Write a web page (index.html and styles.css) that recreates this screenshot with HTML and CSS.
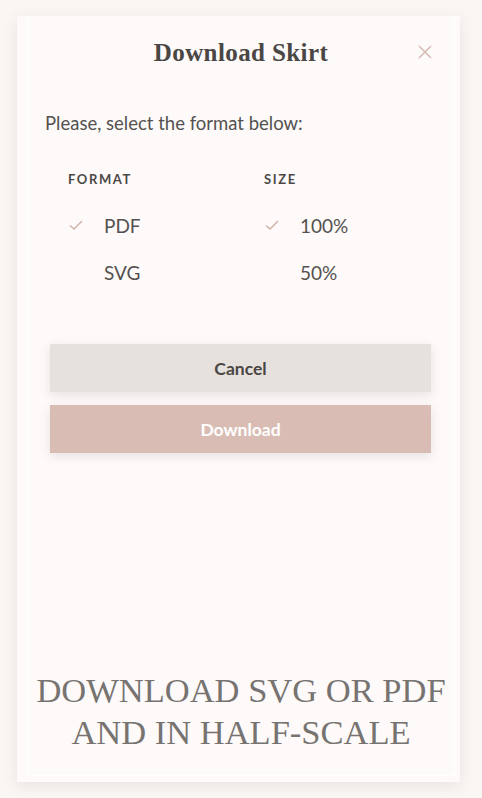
FILE: index.html
```html
<!DOCTYPE html>
<html>
<head>
<meta charset="utf-8">
<link rel="stylesheet" href="styles.css">
</head>
<body>
<div class="card">
  <div class="inner">
    <div class="header">
      <h1 class="title">Download Skirt</h1>
      <span class="close">
        <svg width="14" height="14" viewBox="0 0 14 14"><path d="M1 1L13 13M13 1L1 13" stroke="#d6bcb4" stroke-width="1.6" fill="none"/></svg>
      </span>
    </div>
    <p class="lead">Please, select the format below:</p>
    <div class="options">
      <div class="col">
        <div class="label">FORMAT</div>
        <div class="opt"><span class="check"><svg width="14" height="10" viewBox="0 0 14 10"><path d="M1 5.5L5 9L13 1" stroke="#d2b2aa" stroke-width="1.5" fill="none"/></svg></span>PDF</div>
        <div class="opt"><span class="check"></span>SVG</div>
      </div>
      <div class="col">
        <div class="label">SIZE</div>
        <div class="opt"><span class="check"><svg width="14" height="10" viewBox="0 0 14 10"><path d="M1 5.5L5 9L13 1" stroke="#d2b2aa" stroke-width="1.5" fill="none"/></svg></span>100%</div>
        <div class="opt"><span class="check"></span>50%</div>
      </div>
    </div>
    <div class="buttons">
      <button class="btn cancel">Cancel</button>
      <button class="btn download">Download</button>
    </div>
    <div class="spacer"></div>
    <div class="caption">DOWNLOAD SVG OR PDF<br>AND IN HALF-SCALE</div>
  </div>
</div>
</body>
</html>
```
FILE: styles.css
```css
html, body {
  margin: 0;
  padding: 0;
  background: #f9f6f4;
}
body {
  width: 482px;
  height: 798px;
  padding: 16px 22px 16px 17px;
  box-sizing: border-box;
  font-family: Lato, "Open Sans", sans-serif;
}
.card {
  height: 766px;
  background: #fdfaf9;
  box-shadow: 0 4px 14px rgba(120, 100, 90, 0.12);
  padding: 0 5px 6px 10px;
  box-sizing: border-box;
}
.inner {
  height: 100%;
  border-left: 1px solid #ffffff;
  border-right: 1px solid #ffffff;
  border-bottom: 1px solid #ffffff;
  box-sizing: border-box;
  display: flex;
  flex-direction: column;
  padding: 0 0 0 17px;
}
.header {
  position: relative;
  height: 72px;
  display: flex;
  align-items: center;
  justify-content: center;
  padding-right: 17px;
}
.title {
  margin: 0;
  font-family: "Liberation Serif", "DejaVu Serif", serif;
  font-weight: bold;
  font-size: 25px;
  color: #4a4644;
  letter-spacing: 0.4px;
  padding-top: 1px;
}
.close {
  position: absolute;
  right: 22px;
  top: 29px;
  display: flex;
}
.lead {
  margin: 24px 0 0 0;
  font-size: 18.5px;
  color: #545150;
  line-height: 22px;
}
.options {
  display: flex;
  margin-top: 37px;
  padding-left: 23px;
}
.col {
  width: 196px;
  flex-shrink: 0;
}
.label {
  font-size: 13px;
  font-weight: bold;
  letter-spacing: 1.6px;
  color: #4d4947;
  line-height: 16px;
  margin-bottom: 26px;
}
.opt {
  display: flex;
  align-items: center;
  font-size: 19px;
  color: #555150;
  height: 24px;
  margin-bottom: 23px;
}
.check {
  width: 36px;
  display: flex;
  padding-left: 1px;
  box-sizing: border-box;
}
.buttons {
  display: flex;
  flex-direction: column;
  gap: 13px;
  margin-top: 37px;
  margin-left: 5px;
  margin-right: 23px;
}
.btn {
  height: 48px;
  border: none;
  font-family: Lato, sans-serif;
  font-size: 17.5px;
  font-weight: bold;
  box-shadow: 0 3px 10px rgba(100, 80, 70, 0.14);
  cursor: pointer;
}
.cancel {
  background: #e6e1dd;
  color: #4a4644;
}
.download {
  background: #d9bdb5;
  color: #ffffff;
}
.spacer {
  flex: 1;
}
.caption {
  font-family: "Liberation Serif", "DejaVu Serif", serif;
  font-size: 34.5px;
  line-height: 42px;
  color: #777371;
  text-align: center;
  margin-left: -17px;
  margin-bottom: 22px;
}
```
